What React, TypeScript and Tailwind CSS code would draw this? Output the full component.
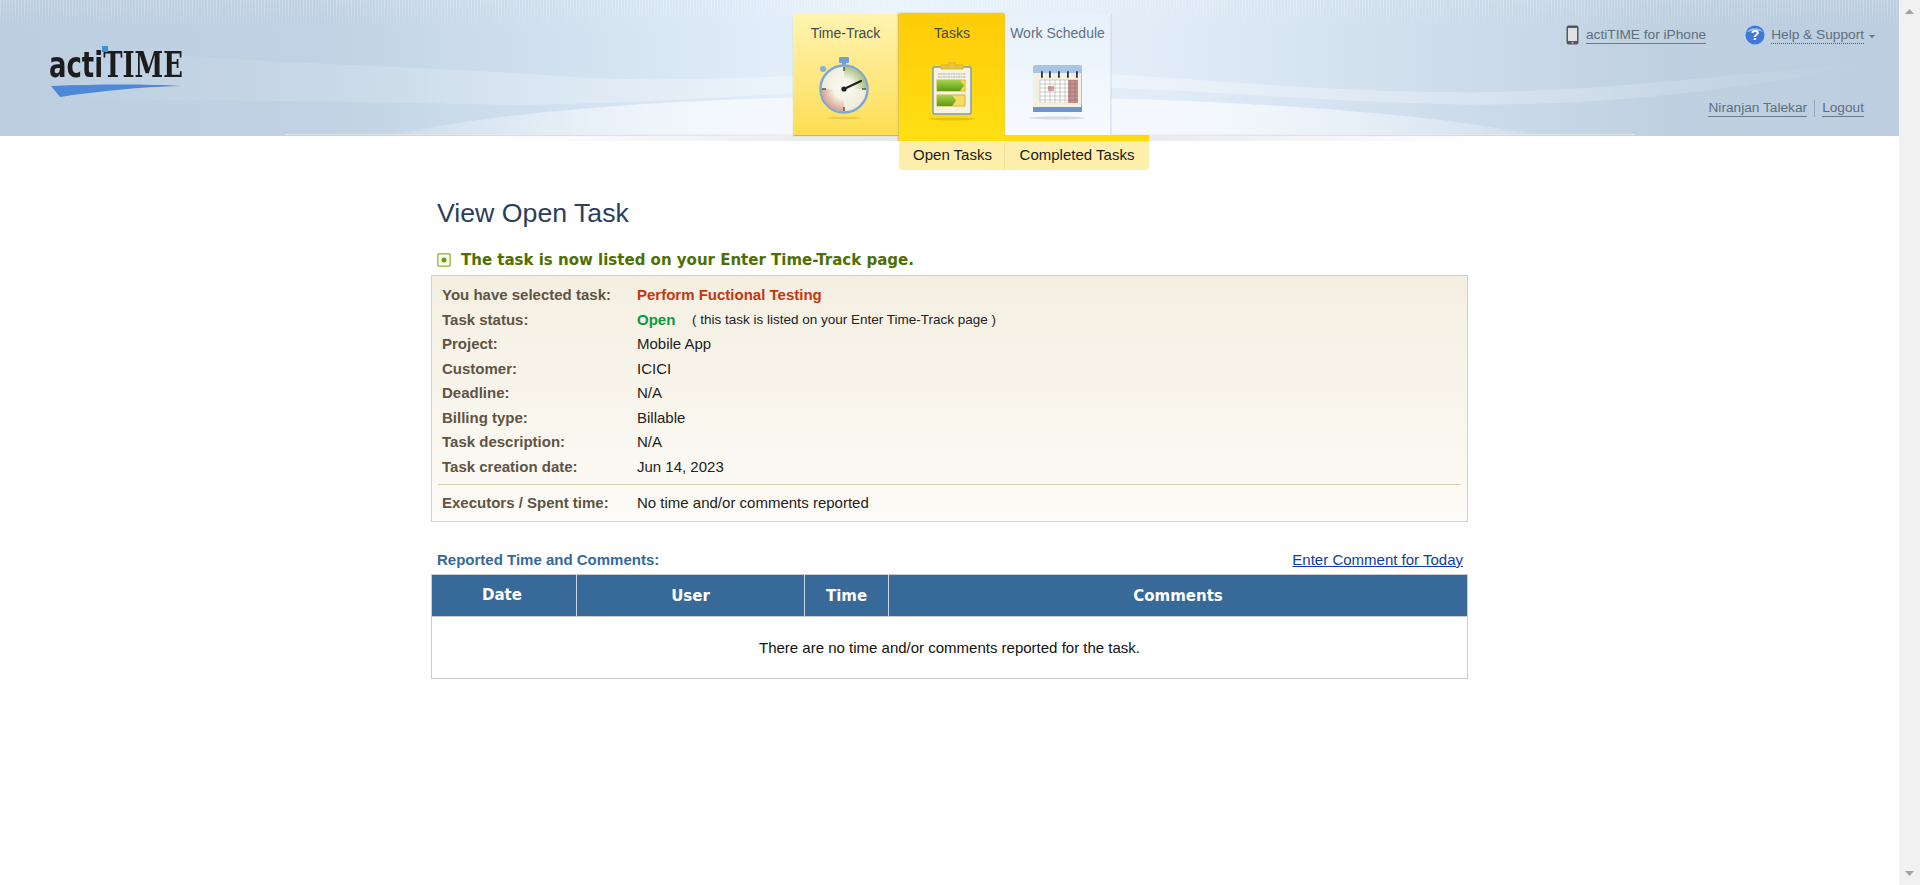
const details: [string, string][] = [
  ["Project:", "Mobile App"],
  ["Customer:", "ICICI"],
  ["Deadline:", "N/A"],
  ["Billing type:", "Billable"],
  ["Task description:", "N/A"],
  ["Task creation date:", "Jun 14, 2023"],
];

function HeaderBackdrop() {
  return (
    <svg className="absolute inset-0 h-[136px] w-[1899px]" viewBox="0 0 1899 136" preserveAspectRatio="none">
      <defs>
        <linearGradient id="sky" x1="0" x2="1" y1="0" y2="0">
          <stop offset="0" stopColor="#bccee0" />
          <stop offset="0.17" stopColor="#c0d2e3" />
          <stop offset="0.34" stopColor="#d8e6f3" />
          <stop offset="0.47" stopColor="#eaf4fd" />
          <stop offset="0.6" stopColor="#e2edf8" />
          <stop offset="0.75" stopColor="#cfdeec" />
          <stop offset="0.88" stopColor="#bfd0e1" />
          <stop offset="1" stopColor="#bccee0" />
        </linearGradient>
        <linearGradient id="stripeFade" x1="0" x2="0" y1="0" y2="1">
          <stop offset="0" stopColor="#fff" stopOpacity="0.9" />
          <stop offset="1" stopColor="#fff" stopOpacity="0" />
        </linearGradient>
        <pattern id="stripes" width="3" height="30" patternUnits="userSpaceOnUse">
          <rect width="1" height="30" fill="#fff" opacity="0.28" />
        </pattern>
        <mask id="stripeMask">
          <rect width="1899" height="30" fill="url(#stripeFade)" />
        </mask>
        <linearGradient id="swell" x1="0" x2="1" y1="0" y2="0">
          <stop offset="0" stopColor="#fff" stopOpacity="0" />
          <stop offset="0.15" stopColor="#fff" stopOpacity="0.12" />
          <stop offset="0.5" stopColor="#fff" stopOpacity="0.4" />
          <stop offset="0.85" stopColor="#fff" stopOpacity="0.2" />
          <stop offset="1" stopColor="#fff" stopOpacity="0" />
        </linearGradient>
        <linearGradient id="dome" x1="0" x2="1" y1="0" y2="0">
          <stop offset="0" stopColor="#f5f9fd" stopOpacity="0.15" />
          <stop offset="0.3" stopColor="#f5f9fd" stopOpacity="0.95" />
          <stop offset="0.7" stopColor="#f5f9fd" stopOpacity="0.95" />
          <stop offset="1" stopColor="#f5f9fd" stopOpacity="0.15" />
        </linearGradient>
      </defs>
      <rect width="1899" height="136" fill="url(#sky)" />
      <rect width="1899" height="30" fill="url(#stripes)" mask="url(#stripeMask)" />
      <path d="M30 42C190 62 420 66 560 76C700 86 800 72 960 70C1120 68 1260 90 1440 92C1600 94 1740 72 1880 62C1740 90 1600 108 1440 104C1280 100 1120 82 960 86C760 92 620 108 460 104C300 100 150 100 30 100C100 84 110 60 30 42Z" fill="url(#swell)" />
      <path d="M392 135C520 108 700 97 900 96C1160 95 1400 108 1537 135Z" fill="url(#dome)" />
      <rect x="285" y="134" width="1350" height="1" fill="#e6edf4" opacity="0.7" />
    </svg>
  );
}

function Logo() {
  return (
    <div className="flex w-[140px] flex-col">
      <div className="relative h-[38px]">
        <div className="origin-left scale-x-[0.72] font-['DejaVu_Sans'] text-[36px] leading-[38px] font-bold whitespace-nowrap text-[#1c1c1c]">
          acti<span className="font-['DejaVu_Serif']">TIME</span>
        </div>
        <span className="absolute top-[1px] left-[53px] h-[6px] w-[6px] bg-[#3d93d6]" />
      </div>
      <svg width="136" height="16" viewBox="0 0 136 16">
        <path d="M2 3C50 1 100 1 133 3C90 4 50 8 11 14Z" fill="#4d89d8" />
      </svg>
    </div>
  );
}

function StopwatchIcon() {
  return (
    <svg width="56" height="64" viewBox="0 0 56 64">
      <defs>
        <radialGradient id="faceGrad" cx="0.5" cy="0.45" r="0.55">
          <stop offset="0" stopColor="#fdfcf4" />
          <stop offset="1" stopColor="#ecead6" />
        </radialGradient>
        <radialGradient id="greenGrad" gradientUnits="userSpaceOnUse" cx="28" cy="33" r="22.5">
          <stop offset="0.45" stopColor="#b3c98c" stopOpacity="0" />
          <stop offset="1" stopColor="#a7c080" />
        </radialGradient>
        <radialGradient id="redGrad" gradientUnits="userSpaceOnUse" cx="28" cy="33" r="22.5">
          <stop offset="0.45" stopColor="#dda593" stopOpacity="0" />
          <stop offset="1" stopColor="#dba193" />
        </radialGradient>
      </defs>
      <ellipse cx="28" cy="62" rx="17" ry="1.5" fill="#c9a92a" opacity="0.35" />
      <rect x="23" y="1" width="10" height="6" rx="1" fill="#6f9fd8" />
      <rect x="26" y="6" width="4" height="5" fill="#6f9fd8" />
      <circle cx="7" cy="13" r="3" fill="#84aede" />
      <circle cx="28" cy="33" r="23.500" fill="url(#faceGrad)" stroke="#7fa8d8" strokeWidth="2.500" />
      <path d="M28 33L28 10.500A22.500 22.500 0 0 1 50.500 33Z" fill="url(#greenGrad)" />
      <path d="M28 33L5.500 33A22.500 22.500 0 0 0 28 55.500Z" fill="url(#redGrad)" />
      <path d="M28 11V15M28 51V55M6 33H10M46 33H50" stroke="#55554a" strokeWidth="1.500" />
      <path d="M28 33L45 25" stroke="#222" strokeWidth="2.200" strokeLinecap="round" />
      <circle cx="28" cy="33" r="2.600" fill="#222" />
    </svg>
  );
}

function ClipboardIcon() {
  return (
    <svg width="46" height="60" viewBox="0 0 46 60">
      <defs>
        <linearGradient id="barGrad" x1="0" x2="0" y1="0" y2="1">
          <stop offset="0" stopColor="#a8d24f" />
          <stop offset="1" stopColor="#5c9a10" />
        </linearGradient>
      </defs>
      <ellipse cx="23" cy="57" rx="23" ry="1.500" fill="#b58f00" opacity="0.35" />
      <rect x="4" y="5" width="38" height="47" rx="1.500" fill="#f6f3e4" stroke="#7d9cbc" strokeWidth="1.500" />
      <path d="M12 7V3H20V0H26V3H34V7Z" fill="#e6c53a" stroke="#d3b02b" strokeWidth="0.800" />
      <path d="M9 12H37M9 15H37" stroke="#c6c6c0" strokeWidth="1.500" strokeDasharray="2 0.500" />
      <rect x="8" y="18" width="28" height="11" fill="#f5dc62" stroke="#d7b62a" />
      <path d="M8 18H31L35 23.500L31 29H8Z" fill="url(#barGrad)" />
      <rect x="8" y="33" width="28" height="11" fill="#f5dc62" stroke="#d7b62a" />
      <path d="M8 33H23L27 38.500L23 44H8Z" fill="url(#barGrad)" />
    </svg>
  );
}

function CalendarIcon() {
  const rings = [17, 25, 34, 43, 52];
  return (
    <svg width="68" height="56" viewBox="0 0 68 56">
      <ellipse cx="33" cy="53" rx="28" ry="1.500" fill="#a9adb0" opacity="0.4" />
      <rect x="9" y="0" width="49" height="47" rx="2" fill="#a8c5e8" />
      <rect x="9" y="40" width="49" height="7" rx="1" fill="#6c97cc" />
      <rect x="9" y="8" width="48" height="34" fill="#f3f0e2" />
      <rect x="16" y="15" width="38" height="22" fill="#fdfdfa" />
      <rect x="44" y="15" width="10" height="23" fill="#c88f8f" />
      <rect x="24" y="21" width="6" height="5" fill="#dca7a7" />
      {[15, 19, 23, 27, 31, 35].map((y) => (
        <path key={y} d={`M16 ${y}H54`} stroke="#55555a" strokeWidth="0.500" opacity="0.55" />
      ))}
      {[16, 21, 26, 31, 36, 41, 46, 51].map((x) => (
        <path key={x} d={`M${x} 15V38`} stroke="#55555a" strokeWidth="0.500" opacity="0.55" />
      ))}
      {rings.map((x) => (
        <rect key={x} x={x} y="6" width="1.800" height="7" rx="0.900" fill="#2f2f35" />
      ))}
    </svg>
  );
}

function NavTabs() {
  return (
    <div className="relative flex h-[136px] pt-[13px]">
      <div className="flex h-[122px] w-[106px] flex-col items-center rounded-t-[2px] border-r border-[#f8e27c] bg-linear-to-b from-[#fff3b0] to-[#fdde4f] shadow-[0_1px_1px_#9fb0c4]">
        <span className="mt-[11px] text-[14px] leading-[18px] text-[#3e4a54]">Time-Track</span>
        <div className="mt-[14px] mr-[4px]">
          <StopwatchIcon />
        </div>
      </div>
      <div className="flex h-[128px] w-[106px] flex-col items-center rounded-t-[2px] bg-linear-to-b from-[#fecc08] to-[#ffdf14] shadow-[-1px_0_2px_#d8b93c]">
        <span className="mt-[11px] text-[14px] leading-[18px] text-[#444a3a]">Tasks</span>
        <div className="mt-[20px]">
          <ClipboardIcon />
        </div>
      </div>
      <div className="flex h-[122px] w-[106px] flex-col items-center border-r border-[#dde8f4] bg-linear-to-b from-[#e6f1fb] to-[#f8fbff] shadow-[0_1px_1px_#93a6bc]">
        <span className="mt-[11px] text-[14px] leading-[18px] whitespace-nowrap text-[#5f6f86]">Work Schedule</span>
        <div className="mt-[23px]">
          <CalendarIcon />
        </div>
      </div>
      <div className="absolute top-[135px] left-[212px] h-[6px] w-[144px] bg-[#ffd90f]" />
      <div className="absolute top-[141px] left-[106px] flex h-[29px] w-[250px] rounded-b-[3px] bg-[#fef0ac] text-[15px] leading-[27px] text-[#1a1a1a]">
        <span className="w-[106px] border-r border-[#f2e29c] pl-[2px] text-center">Open Tasks</span>
        <span className="flex-1 text-center">Completed Tasks</span>
      </div>
    </div>
  );
}

function UserLinks() {
  return (
    <div className="flex flex-1 flex-col items-end text-[13.7px] leading-[17px] text-[#5f6e7e]">
      <div className="mt-[25px] flex h-[20px] items-center pr-[24px]">
        <svg width="13" height="20" viewBox="0 0 13 20">
          <rect x="0.500" y="0.500" width="12" height="19" rx="2" fill="#55585b" />
          <rect x="2" y="3" width="9" height="13" fill="#dfe1e3" />
          <circle cx="6.500" cy="17.800" r="1" fill="#bbb" />
        </svg>
        <span className="ml-[7px] border-b border-[#6d7a88]">actiTIME for iPhone</span>
        <svg width="20" height="20" viewBox="0 0 20 20" className="ml-[39px]">
          <circle cx="10" cy="10" r="9.500" fill="#3f78d8" />
          <path d="M2 7A9 7 0 0 1 18 7C12 5 8 6 2 7Z" fill="#9cc0f2" />
          <text x="10" y="15" textAnchor="middle" fontSize="14" fontWeight="700" fill="#fff" fontFamily="Liberation Sans, sans-serif">?</text>
        </svg>
        <span className="ml-[6px] border-b border-dotted border-[#4d5c6b]">Help &amp; Support</span>
        <svg width="6" height="3" viewBox="0 0 6 3" className="mt-[3px] ml-[5px]">
          <path d="M0 0H6L3 3Z" fill="#6a7582" />
        </svg>
      </div>
      <div className="mt-[54px] flex h-[18px] items-center pr-[35px]">
        <span className="border-b border-[#6d7a88]">Niranjan Talekar</span>
        <span className="mx-[7px] h-[17px] w-px bg-[#98a6b4]" />
        <span className="border-b border-[#6d7a88]">Logout</span>
      </div>
    </div>
  );
}

function Header() {
  return (
    <header className="relative z-10 h-[136px] w-[1899px]">
      <HeaderBackdrop />
      <div className="absolute top-[136px] left-[500px] h-[5px] w-[980px] bg-linear-to-r from-white via-[#e2e2e2] to-white" />
      <div className="relative flex h-[136px]">
        <div className="w-[793px] pt-[45px] pl-[49px]">
          <Logo />
        </div>
        <NavTabs />
        <UserLinks />
      </div>
    </header>
  );
}

function TaskBox() {
  return (
    <div className="h-[247px] border border-[#d9d2ad] bg-linear-to-b from-[#f4efe1] to-[#fdfbf7] pt-[7px] text-[15px] leading-[24.5px]">
      <div className="flex pl-[10px]">
        <span className="w-[195px] font-bold text-[#5f5443]">You have selected task:</span>
        <span className="font-bold text-[#c8360c]">Perform Fuctional Testing</span>
      </div>
      <div className="flex pl-[10px]">
        <span className="w-[195px] font-bold text-[#5f5443]">Task status:</span>
        <span className="w-[55px] font-bold text-[#0c9b3f]">Open</span>
        <span className="text-[13.5px] text-[#222]">( this task is listed on your Enter Time-Track page )</span>
      </div>
      {details.map(([label, value]) => (
        <div key={label} className="flex pl-[10px]">
          <span className="w-[195px] font-bold text-[#5f5443]">{label}</span>
          <span className="text-[#222]">{value}</span>
        </div>
      ))}
      <div className="mx-[6px] mt-[5px] h-px bg-[#d8d2b2]" />
      <div className="mt-[6px] flex pl-[10px]">
        <span className="w-[195px] font-bold text-[#5f5443]">Executors / Spent time:</span>
        <span className="text-[#222]">No time and/or comments reported</span>
      </div>
    </div>
  );
}

function CommentsTable() {
  return (
    <div className="border border-[#cccccc]">
      <div className="flex h-[41px] bg-[#376a99] font-['DejaVu_Sans'] text-[15px] leading-[43px] font-bold text-white">
        <div className="w-[145px] border-r border-[#c9d4de] pr-[4px] text-center">
          <span className="relative top-[-1px]">Date</span>
        </div>
        <div className="w-[228px] border-r border-[#c9d4de] text-center">User</div>
        <div className="w-[84px] border-r border-[#c9d4de] text-center">Time</div>
        <div className="flex-1 text-center">Comments</div>
      </div>
      <div className="h-[62px] border-t border-[#cccccc] pt-[21px] text-center text-[15px] leading-[20px] text-[#111]">
        There are no time and/or comments reported for the task.
      </div>
    </div>
  );
}

function Scrollbar() {
  return (
    <div className="flex h-[885px] w-[21px] flex-col items-center justify-between bg-[#f1f1f1] pt-[9px] pb-[9px]">
      <svg width="9" height="5" viewBox="0 0 9 5">
        <path d="M4.500 0L9 5H0Z" fill="#a3a3a3" />
      </svg>
      <svg width="9" height="5" viewBox="0 0 9 5">
        <path d="M0 0H9L4.500 5Z" fill="#a3a3a3" />
      </svg>
    </div>
  );
}

export default function App() {
  return (
    <div className="flex h-[885px] w-[1920px] overflow-hidden bg-white font-['Liberation_Sans',Arial,sans-serif]">
      <div className="w-[1899px]">
        <Header />
        <main className="ml-[431px] w-[1037px]">
          <h1 className="mt-[61px] pl-[6px] text-[26.7px] leading-[32px] font-normal text-[#2c3e5c]">View Open Task</h1>
          <div className="mt-[18px] flex h-[28px] items-center pb-[2px] pl-[6px]">
            <svg width="14" height="14" viewBox="0 0 14 14">
              <rect x="0.750" y="0.750" width="12.500" height="12.500" rx="1.500" fill="#f5f8e6" stroke="#a2bb58" strokeWidth="1.500" />
              <rect x="4.500" y="4.500" width="5" height="5" rx="2.500" fill="#6b9a1e" />
            </svg>
            <span className="ml-[10px] font-['DejaVu_Sans'] text-[15px] font-bold text-[#4f6f00]">
              The task is now listed on your Enter Time-Track page.
            </span>
          </div>
          <TaskBox />
          <div className="mt-[27px] flex h-[25px] items-center justify-between pr-[5px] pb-[3px] pl-[6px] text-[15px]">
            <span className="font-bold text-[#36699a]">Reported Time and Comments:</span>
            <a href="#" className="text-[#0b3ea3] underline">
              Enter Comment for Today
            </a>
          </div>
          <CommentsTable />
        </main>
      </div>
      <Scrollbar />
    </div>
  );
}
